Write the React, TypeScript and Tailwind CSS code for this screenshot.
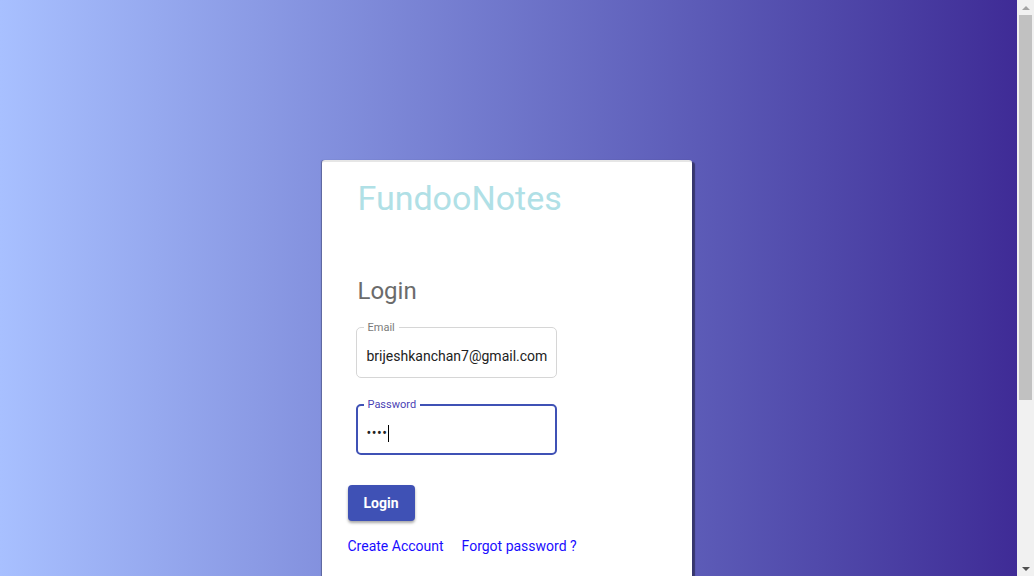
import React from "react"

const font = { fontFamily: "Roboto, 'Noto Sans', sans-serif" }

function OutlinedField({
  label,
  focused,
  children,
}: {
  label: string
  focused?: boolean
  children: React.ReactNode
}) {
  return (
    <div
      className={
        "relative w-[201px] h-[51px] rounded-[5px] flex items-center pt-[7px] " +
        (focused ? "border-2 border-[#3f51b5] px-[9px]" : "border border-[#d6d6d6] px-[10px]")
      }
    >
      <span
        className={
          "absolute bg-white px-[4px] text-[11px] leading-[14px] " +
          (focused ? "text-[#4a3fb5] left-[6px] top-[-8px]" : "text-[#7a7a7a] left-[7px] top-[-7px]")
        }
      >
        {label}
      </span>
      {children}
    </div>
  )
}

function Scrollbar() {
  return (
    <div className="w-[17px] h-full bg-[#f1f1f1] flex flex-col items-center">
      <div className="h-[15px] flex items-center justify-center">
        <div className="w-0 h-0 border-l-[4px] border-r-[4px] border-b-[4px] border-l-transparent border-r-transparent border-b-[#a3a3a3]" />
      </div>
      <div className="w-[13px] h-[385px] bg-[#c1c1c1]" />
      <div className="flex-1" />
      <div className="h-[15px] flex items-center justify-center">
        <div className="w-0 h-0 border-l-[4px] border-r-[4px] border-t-[4px] border-l-transparent border-r-transparent border-t-[#505050]" />
      </div>
    </div>
  )
}

export default function App() {
  return (
    <div className="h-[576px] w-full flex overflow-hidden" style={font}>
      <div className="flex-1 h-[811px] bg-gradient-to-r from-[#a8c0ff] to-[#3f2b96] flex justify-center pt-[160px] pr-[4px]">
        <div className="w-[370px] h-[600px] bg-white rounded-[3px] border-t-2 border-[#e6e6e6] shadow-[3px_2px_1px_rgba(0,0,0,0.4),-1px_0_1px_rgba(0,0,0,0.3)] flex flex-col pt-[16px] pl-[26px]">
          <div className="pl-[10px] text-[34px] leading-[40px] text-[#b0e0e6]">FundooNotes</div>
          <div className="pl-[10px] mt-[59px] text-[24px] leading-[28px] text-[#6b6b6b]">Login</div>
          <div className="pl-[8px] mt-[22px] flex flex-col gap-[26px]">
            <OutlinedField label="Email">
              <span className="text-[14px] text-[#222] whitespace-nowrap">brijeshkanchan7@gmail.com</span>
            </OutlinedField>
            <OutlinedField label="Password" focused>
              <span className="text-[14px] text-[#222] tracking-[0.5px]">••••</span>
              <span className="w-px h-[17px] bg-black ml-[1px]" />
            </OutlinedField>
          </div>
          <button className="mt-[30px] w-[67px] h-[36px] rounded-[4px] bg-[#3f51b5] text-white text-[14px] font-bold shadow-[0_2px_3px_rgba(0,0,0,0.35)]">
            Login
          </button>
          <div className="mt-[15px] flex gap-[18px] text-[14px] leading-[20px] text-[#1a0dff]">
            <a href="#">Create Account</a>
            <a href="#">Forgot password ?</a>
          </div>
        </div>
      </div>
      <Scrollbar />
    </div>
  )
}
